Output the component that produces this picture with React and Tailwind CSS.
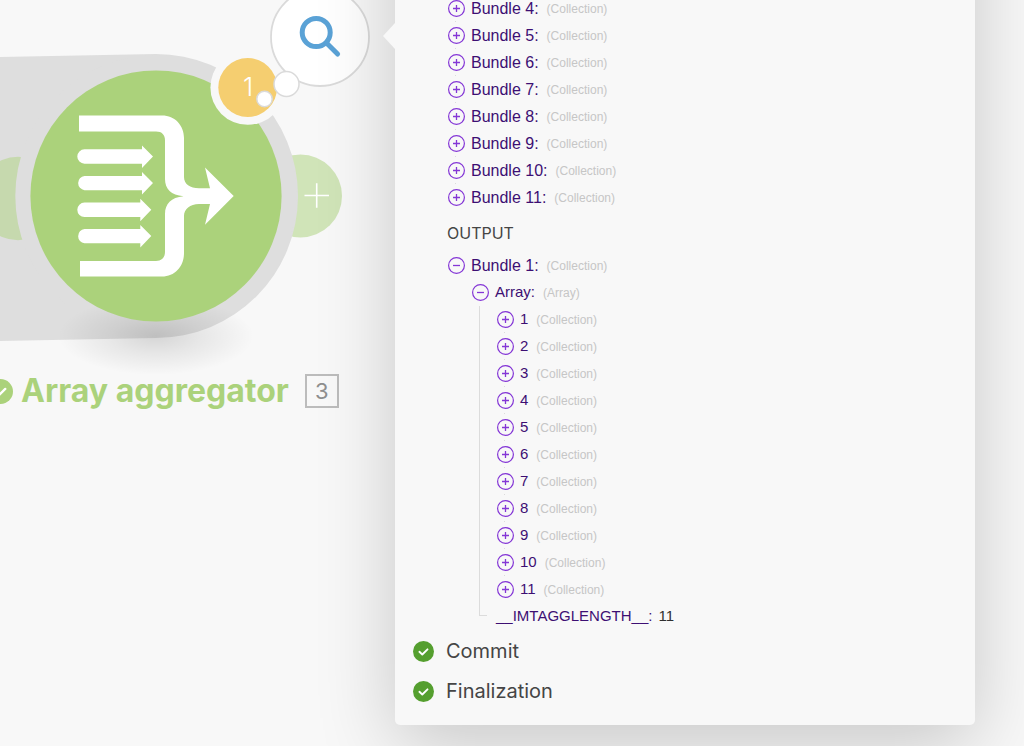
const inputBundles = [4, 5, 6, 7, 8, 9, 10, 11];
const arrayItems = [1, 2, 3, 4, 5, 6, 7, 8, 9, 10, 11];

function Toggle({ open, label, dot }) {
  return (
    <button
      type="button"
      aria-expanded={open}
      aria-label={label}
      className="relative flex h-[27px] w-[17px] items-center text-[#8436d6]"
    >
      <svg width="17" height="17" viewBox="0 0 17 17" fill="none" stroke="currentColor">
        <circle cx="8.5" cy="8.5" r="7.9" strokeWidth="1.2" />
        <path d={open ? "M5 8.5h7" : "M5 8.5h7M8.5 5v7"} strokeWidth="1.3" />
      </svg>
      {dot && <span className="absolute bottom-0 left-[7px] h-px w-px bg-[#dcdcdc]" />}
    </button>
  );
}

function TreeRow({ name, type, open = false, size = "text-[15px]", dot = true }) {
  return (
    <div className="flex h-[27px] items-center">
      <Toggle open={open} label={`Toggle ${name}`} dot={dot} />
      <span className={`ml-1.5 text-[#3d0f73] ${size}`}>{name}</span>
      <span className="ml-2 text-xs text-[#c6c6c6]">({type})</span>
    </div>
  );
}

function CheckIcon({ size, color }) {
  return (
    <svg width={size} height={size} viewBox="0 0 21 21" className="shrink-0" aria-hidden="true">
      <circle cx="10.5" cy="10.5" r="10.5" fill={color} />
      <path
        d="M6.4 10.8l2.9 2.7 5.2-5.2"
        fill="none"
        stroke="#fff"
        strokeWidth="1.9"
        strokeLinecap="round"
        strokeLinejoin="round"
      />
    </svg>
  );
}

function Phase({ name }) {
  return (
    <li className="flex h-10 items-center gap-3 text-xl text-[#454545]">
      <CheckIcon size={21} color="#559f2f" />
      {name}
    </li>
  );
}

function ModuleDrawing() {
  return (
    <svg width="395" height="400" viewBox="0 0 395 400" className="absolute left-0 top-0" aria-hidden="true">
      <defs>
        <radialGradient id="ground">
          <stop offset="0" stopColor="#000" stopOpacity="0.14" />
          <stop offset="0.45" stopColor="#000" stopOpacity="0.07" />
          <stop offset="1" stopColor="#000" stopOpacity="0" />
        </radialGradient>
      </defs>
      <circle cx="300.5" cy="196" r="41.5" fill="#d0e4b8" />
      <path d="M0 57L156 54A142 142 0 0 1 156 338L0 341Z" fill="#dedede" />
      <circle cx="18" cy="198.5" r="41.7" fill="#c6d9ae" />
      <circle cx="156" cy="196" r="140.7" fill="#dedede" />
      <ellipse cx="156" cy="336" rx="98" ry="39" fill="url(#ground)" />
      <circle cx="156" cy="196" r="125.6" fill="#abd27b" />
      <path d="M304.5 195.5h24.5M316.7 183.3v24.5" stroke="#fff" strokeWidth="1.6" />
      <g fill="#fff">
        <path d="M79 115.500H162C175 115.500 184 125.500 184 138V177C184 184 190 188.300 199 188.300H210L205 167.500L233.700 196L205 224.700L210 204H199C190 204 184 209 184 216V253C184 266.500 175 276.500 162 276.500H80V261H156C162 261 165 257 165 252V214C165 204 171 197.500 183.500 196.300C171 195 165 189 165 179V140.500C165 135 162 131.600 156 131.600H79Z" />
        <path d="M84.500 149.300H142V145.500L153 156.500L142 168V163.700H84.500A7.200 7.200 0 0 1 84.500 149.300Z" />
        <path d="M84.500 175.900H142V171.900L153 182.900L142 194.400V190.200H84.500A7.200 7.200 0 0 1 84.500 175.900Z" />
        <path d="M84.500 202.600H140.300V198.800L151.300 209.700L140.300 221.200V217H84.500A7.200 7.200 0 0 1 84.500 202.600Z" />
        <path d="M84.500 229H140.300V225L151.300 236L140.300 247.500V243.300H84.500A7.200 7.200 0 0 1 84.500 229Z" />
      </g>
      <circle cx="320" cy="37" r="49" fill="#fff" stroke="#dadada" strokeWidth="1.8" />
      <circle cx="316.2" cy="32.5" r="14" fill="none" stroke="#5aa2d6" strokeWidth="5" />
      <path d="M326.5 43L337.6 54" stroke="#5aa2d6" strokeWidth="5" strokeLinecap="round" />
      <circle cx="247.7" cy="87.5" r="37.3" fill="#f8f8f8" />
      <circle cx="247.7" cy="87.5" r="29.4" fill="#f5ce70" />
    </svg>
  );
}

function Canvas() {
  return (
    <main className="relative w-[395px] shrink-0">
      <ModuleDrawing />
      <span className="absolute left-[233px] top-[71px] w-[30px] text-center text-[26px] font-light leading-8 text-white">1</span>
      <svg width="50" height="50" viewBox="0 0 50 50" className="absolute left-[252px] top-[62px]" aria-hidden="true">
        <circle cx="34.5" cy="22" r="12.5" fill="#fff" stroke="#dadada" strokeWidth="1.5" />
        <circle cx="12.5" cy="37" r="7.7" fill="#fff" stroke="#dadada" strokeWidth="1.5" />
      </svg>
      <button type="button" aria-label="Inspect bundles" className="absolute left-[272px] top-0 h-[72px] w-24 rounded-b-full" />
      <button type="button" aria-label="Add module" className="absolute left-[298px] top-[155px] h-[82px] w-11 rounded-r-full" />
      <div className="absolute -left-3 top-[374px] flex h-[34px] items-center whitespace-nowrap">
        <CheckIcon size={25} color="#abd27b" />
        <h1 className="ml-2 text-[32px] font-bold text-[#abd27b]">Array aggregator</h1>
        <span className="ml-4 flex h-[34px] w-[34px] items-center justify-center border-2 border-[#bcbcbc] text-[22px] text-[#8f8f8f]">
          3
        </span>
      </div>
    </main>
  );
}

export default function App() {
  return (
    <div className="flex min-h-screen items-start overflow-hidden bg-[#f8f8f8] font-['Inter',sans-serif]">
      <Canvas />
      <aside className="relative -mt-32 mr-[49px] flex-1 rounded-[5px] bg-[#f8f8f8] pb-3.5 pt-[123px] shadow-[0_20px_80px_rgba(0,0,0,0.2)]">
        <span className="absolute -left-3 top-[151px] h-[26px] w-3 bg-[#f8f8f8] [clip-path:polygon(0_50%,100%_0,100%_100%)]" />
        <section className="pl-[53px] font-['Liberation_Sans',sans-serif]">
          <ul>
            {inputBundles.map((n) => (
              <li key={n}>
                <TreeRow name={`Bundle ${n}:`} type="Collection" size="text-base" dot={n !== 11} />
              </li>
            ))}
          </ul>
          <h2 className="-ml-px pb-[7px] pt-2.5 font-['Inter',sans-serif] text-base leading-6 text-[#454545]">OUTPUT</h2>
          <TreeRow name="Bundle 1:" type="Collection" size="text-base" open dot={false} />
          <div className="pl-6">
            <TreeRow name="Array:" type="Array" open dot={false} />
            <div className="relative pl-[25px]">
              <span className="absolute bottom-3.5 left-[7px] top-0 w-2 border-b border-l border-[#dcdcdc]" />
              <ul>
                {arrayItems.map((n) => (
                  <li key={n}>
                    <TreeRow name={`${n}`} type="Collection" dot={n !== 11} />
                  </li>
                ))}
                <li className="-ml-px flex h-[27px] items-center gap-1.5 text-[15px] text-[#3d0f73]">
                  __IMTAGGLENGTH__: <span className="text-[#2f2f2f]">11</span>
                </li>
              </ul>
            </div>
          </div>
        </section>
        <ul className="pl-[18px] pt-px">
          <Phase name="Commit" />
          <Phase name="Finalization" />
        </ul>
      </aside>
    </div>
  );
}
